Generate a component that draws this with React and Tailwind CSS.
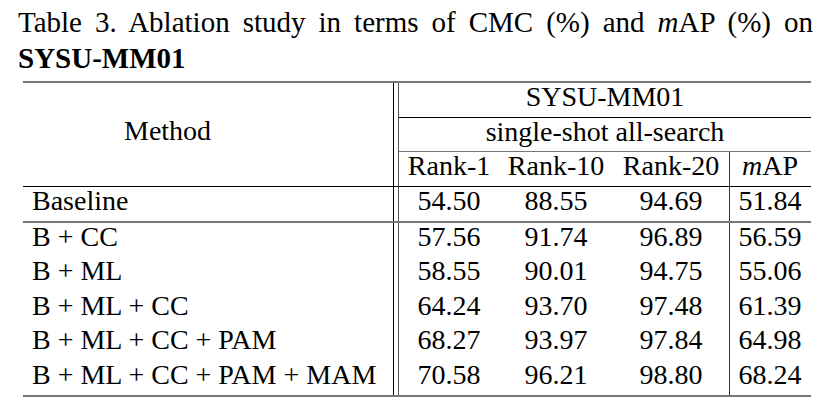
const rows = [
    {name: "B + CC", r1: "57.56", r10: "91.74", r20: "96.89", map: "56.59", h: "h-[34px]"},
    {name: "B + ML", r1: "58.55", r10: "90.01", r20: "94.75", map: "55.06", h: "h-[35px]"},
    {name: "B + ML + CC", r1: "64.24", r10: "93.70", r20: "97.48", map: "61.39", h: "h-[34px]"},
    {name: "B + ML + CC + PAM", r1: "68.27", r10: "93.97", r20: "97.84", map: "64.98", h: "h-[35px]"},
    {name: "B + ML + CC + PAM + MAM", r1: "70.58", r10: "96.21", r20: "98.80", map: "68.24", h: "h-[34px]"},
];

const Row = ({name, r1, r10, r20, map, h, bottom}) => (
    <div className={`flex ${h} ${bottom}`}>
        <div className="w-[371px] border-r border-black pl-[9px] leading-[28px]">{name}</div>
        <div className="w-[4px]"/>
        <div className="w-[413px] flex border-l border-[#555] leading-[28px] text-center">
            <div className="w-[100px]">{r1}</div>
            <div className="w-[114px]">{r10}</div>
            <div className="w-[117px] border-r border-[#333]">{r20}</div>
            <div className="w-[80px]">{map}</div>
        </div>
    </div>
);

const App = () => {
    return (
        <div className="w-[837px] h-[407px] bg-white text-black overflow-hidden"
             style={{fontFamily: '"Liberation Serif", "Times New Roman", serif'}}>
            <p className="pt-[4px] ml-[18px] w-[795px] text-[29px] leading-[36px] text-justify">
                Table 3. Ablation study in terms of CMC (%) and <i>m</i>AP (%) on <b>SYSU-MM01</b>
            </p>

            <div className="mt-[5px] ml-[23px] w-[788px] text-[28px] border-t-2 border-b-2 border-[#777]">
                {/* header */}
                <div className="flex border-b border-black">
                    <div className="w-[371px] border-r border-black pl-[101px] pt-[34px] leading-[28px]">Method</div>
                    <div className="w-[4px]"/>
                    <div className="w-[413px] border-l border-[#555] text-center">
                        <div className="h-[35px] leading-[28px] border-b border-black">SYSU-MM01</div>
                        <div className="h-[34px] leading-[28px] border-b border-[#777]">single-shot all-search</div>
                        <div className="h-[34px] flex leading-[28px]">
                            <div className="w-[100px]">Rank-1</div>
                            <div className="w-[114px]">Rank-10</div>
                            <div className="w-[117px] border-r border-[#333]">Rank-20</div>
                            <div className="w-[80px]"><i>m</i>AP</div>
                        </div>
                    </div>
                </div>

                <Row name="Baseline" r1="54.50" r10="88.55" r20="94.69" map="51.84" h="h-[36px]"
                     bottom="border-b-2 border-[#777]"/>

                {rows.map((r) => (
                    <Row key={r.name} {...r} bottom=""/>
                ))}
            </div>
        </div>
    );
};

export default App;
